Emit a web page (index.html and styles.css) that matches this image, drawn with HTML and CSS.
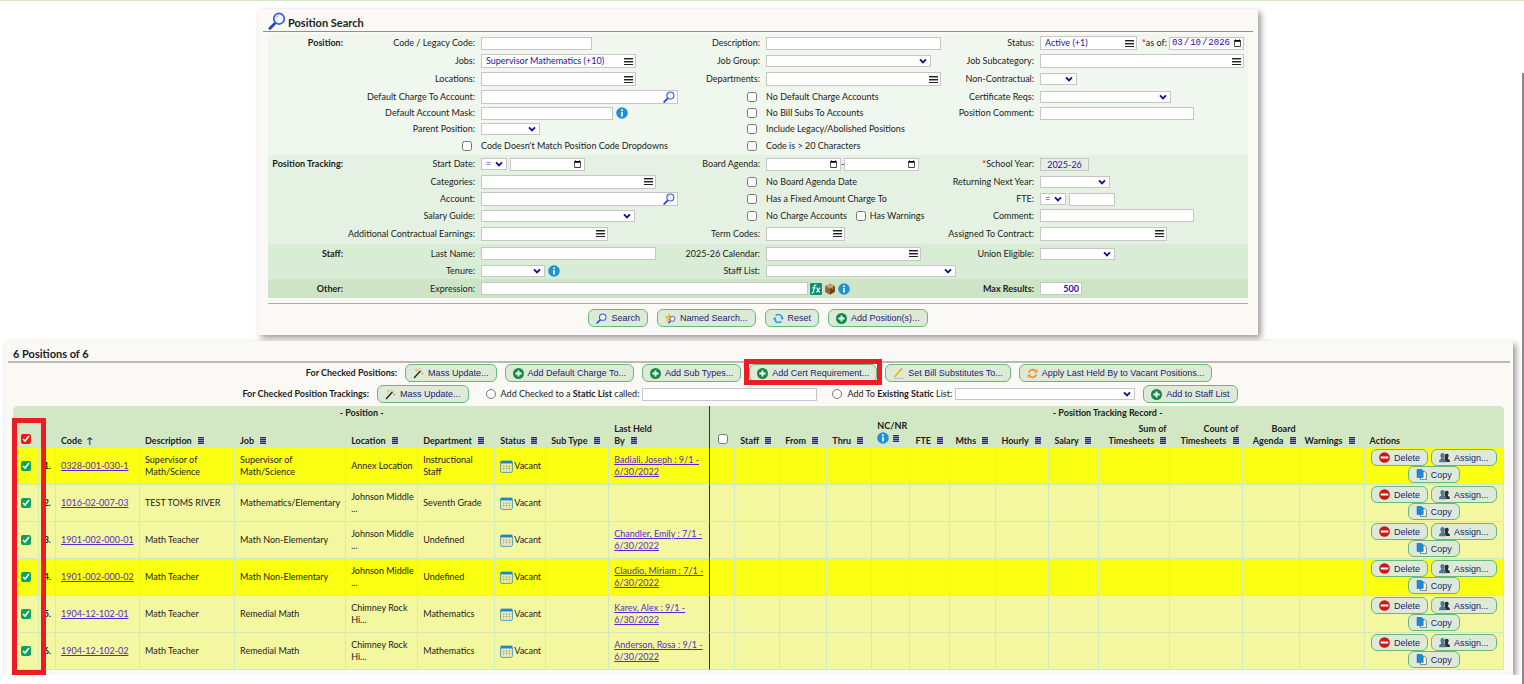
FILE: index.html
```html
<!DOCTYPE html>
<html lang="en">
<head>
<meta charset="utf-8">
<title>Position Search</title>
<link rel="stylesheet" href="styles.css">
</head>
<body>
<svg class="sprite" aria-hidden="true">
  <symbol id="lens" viewBox="0 0 16 16"><path d="M6 10.2L1.6 14.6" stroke="#2744c8" stroke-width="2.4" stroke-linecap="round"/><circle cx="9.8" cy="6" r="4.7" fill="#eef7ff" stroke="#3a55d8" stroke-width="1.5"/><path d="M7.4 5.2a2.8 2.8 0 0 1 2.2-2" stroke="#9fc4f4" fill="none"/></symbol>
  <symbol id="starlens" viewBox="0 0 16 16"><path d="M6 .8l1.7 4 4.3.4-3.2 3 1 4.4L6 10.400 2.200 12.600l1-4.400L0 5.200l4.300-.4z" fill="#f7c510" stroke="#d9a400" stroke-width=".5"/><path d="M8 11.400L5 15" stroke="#2744c8" stroke-width="2"/><circle cx="10.800" cy="8.500" r="3.700" fill="#f3f3e0" stroke="#4a63c8" stroke-width="1.400"/></symbol>
  <symbol id="reset" viewBox="0 0 16 16"><path d="M13.600 7A5.800 5.800 0 0 0 4 3.700M2.400 9A5.800 5.800 0 0 0 12 12.300" fill="none" stroke="#2d9fe0" stroke-width="2.300"/><path d="M10.500 6.500h5.500l-2.700 4zM0 9.500h5.500L2.700 5.500z" fill="#2d9fe0"/></symbol>
  <symbol id="plus" viewBox="0 0 16 16"><circle cx="8" cy="8" r="8" fill="#128a45"/><path d="M8 3.500v9M3.500 8h9" stroke="#fff" stroke-width="2.600"/></symbol>
  <symbol id="wand" viewBox="0 0 16 16"><path d="M1.500 14.500L12 3" stroke="#222" stroke-width="1.900"/><path d="M10.700 4.300L13.500 1.200" stroke="#eee" stroke-width="1.700"/><path d="M5 1v4M3 3h4M13.500 6v4M11.500 8h4M9 0v2" stroke="#f3a33a" stroke-width="1.100"/></symbol>
  <symbol id="pencil" viewBox="0 0 16 16"><path d="M2 15.200h13" stroke="#b9b9b9" stroke-width="1.300"/><path d="M3.500 11.500L11.700 2" stroke="#f2b90f" stroke-width="2.600"/><path d="M11.500 2.300L13 .6" stroke="#f07fae" stroke-width="2.600"/><path d="M2.300 10.500l2.300 2-3.300 1.500z" fill="#d8a56a"/></symbol>
  <symbol id="cycle" viewBox="0 0 16 16"><path d="M2.500 6.500A5.800 5.800 0 0 1 12 4M13.500 9.500A5.800 5.800 0 0 1 4 12" fill="none" stroke="#f08a24" stroke-width="2.300"/><path d="M10 6.500h5V1.200zM6 9.500H1v5.300z" fill="#f08a24"/></symbol>
  <symbol id="info" viewBox="0 0 16 16"><circle cx="8" cy="8" r="7.700" fill="#1e90d8"/><circle cx="8" cy="4.200" r="1.300" fill="#fff"/><path d="M8 6.800v5.700" stroke="#fff" stroke-width="2.200"/></symbol>
  <symbol id="fx" viewBox="0 0 16 16"><rect width="16" height="16" rx="1.500" fill="#0f8f7a"/><path d="M8.300 2.800C5.500 2 5.800 5 5 9.500c-.4 2.500-.8 4-2.800 3.600M3.200 6.300h4.300M8.600 6.300c2 0 2.300 6 4.600 5.800M13.700 6.300c-1.600 0-3.400 5.800-5.400 5.800" fill="none" stroke="#fff" stroke-width="1.500"/></symbol>
  <symbol id="box" viewBox="0 0 16 16"><path d="M8 .5l6.500 3.300L8 7.200 1.500 3.800z" fill="#c98f58"/><path d="M1.500 3.800L8 7.200v8.300l-6.500-3.600z" fill="#9a6233"/><path d="M14.500 3.800L8 7.200v8.300l6.500-3.600z" fill="#6f4320"/><path d="M4.500 2.300L11 5.700v2" stroke="#e8c79c" fill="none"/></symbol>
  <symbol id="cal" viewBox="0 0 16 16"><rect x=".8" y="1.500" width="14.400" height="13.700" rx="1.800" fill="#f6f3c8" fill-opacity=".75" stroke="#4795b8" stroke-width="1.200"/><path d="M.8 1h14.400v3.300H.8z" fill="#1a86d2"/><path d="M4.500 5.500v8M8 5.500v8M11.500 5.500v8M2.500 7.500h11M2.500 10.500h11" stroke="#a9a787" stroke-width=".7"/></symbol>
  <symbol id="stop" viewBox="0 0 16 16"><circle cx="8" cy="8" r="7.800" fill="#cf1616"/><path d="M2.500 8h11" stroke="#fff" stroke-width="3"/></symbol>
  <symbol id="people" viewBox="0 0 16 16"><path d="M8.500 4.500a3 3 0 0 1 5.500 0c.2 1.700-.3 3-1 4v1.500c1.500.5 3 1 3 4.500H8z" fill="#26303c"/><path d="M2 4a3.200 3.200 0 0 1 6.200 0c.2 1.800-.4 3.200-1.200 4.200v1.600c2 .6 3.500 1.200 3.500 5.200H0c0-4 1.200-4.600 3.200-5.200V8.200C2.400 7.200 1.800 5.800 2 4z" fill="#557590"/></symbol>
  <symbol id="copy" viewBox="0 0 16 16"><path d="M6.500 3.500h6l2.500 2.500v9.500h-8.500z" fill="#fff" stroke="#444" stroke-width="1"/><path d="M1.500.5H8l2.500 2.500v9.500h-9z" fill="#1b8bd8" stroke="#0f5f9a" stroke-width=".7"/></symbol>
</svg>

<section class="panel search-panel">
  <h1 class="panel-title"><svg class="i18"><use href="#lens"/></svg><span>Position Search</span></h1>
  <form class="form">
    <div class="grid sec1">
      <span class="sect">Position:</span>
      <label class="lbl" for="code">Code / Legacy Code:</label><div class="ctl"><input id="code" class="f w111"></div>
      <label class="lbl" for="desc">Description:</label><div class="ctl"><input id="desc" class="f w175"></div>
      <label class="lbl" for="status">Status:</label><div class="ctl"><span class="combo w97"><input id="status" value="Active (+1)"><button type="button" aria-label="Choose" class="bars"></button></span><label class="asof" for="asof"><b class="req">*</b>as of:</label><input id="asof" type="date" class="f date w75 filled" value="2026-03-10"></div>

      <label class="lbl c2" for="jobs">Jobs:</label><div class="ctl"><span class="combo w155"><input id="jobs" value="Supervisor Mathematics (+10)"><button type="button" aria-label="Choose" class="bars"></button></span></div>
      <label class="lbl" for="jg">Job Group:</label><div class="ctl"><select id="jg" class="f w165"><option></option></select></div>
      <label class="lbl" for="jsub">Job Subcategory:</label><div class="ctl"><span class="combo w204"><input id="jsub"><button type="button" aria-label="Choose" class="bars"></button></span></div>

      <label class="lbl c2" for="loc">Locations:</label><div class="ctl"><span class="combo w155"><input id="loc"><button type="button" aria-label="Choose" class="bars"></button></span></div>
      <label class="lbl" for="dept">Departments:</label><div class="ctl"><span class="combo w175"><input id="dept"><button type="button" aria-label="Choose" class="bars"></button></span></div>
      <label class="lbl" for="nc">Non-Contractual:</label><div class="ctl"><select id="nc" class="f w37"><option></option></select></div>

      <label class="lbl c2" for="dca">Default Charge To Account:</label><div class="ctl"><span class="combo w197"><input id="dca"><button type="button" aria-label="Look up" class="look"><svg class="i12"><use href="#lens"/></svg></button></span></div>
      <div class="chk"><input type="checkbox" id="k1"></div><label class="ctl" for="k1">No Default Charge Accounts</label>
      <label class="lbl" for="cert">Certificate Reqs:</label><div class="ctl"><select id="cert" class="f w131"><option></option></select></div>

      <label class="lbl c2" for="mask">Default Account Mask:</label><div class="ctl"><input id="mask" class="f w132"><svg class="i12"><use href="#info"/></svg></div>
      <div class="chk"><input type="checkbox" id="k2"></div><label class="ctl" for="k2">No Bill Subs To Accounts</label>
      <label class="lbl" for="pcom">Position Comment:</label><div class="ctl"><input id="pcom" class="f w154"></div>

      <label class="lbl c2" for="parent">Parent Position:</label><div class="ctl"><select id="parent" class="f w59"><option></option></select></div>
      <div class="chk"><input type="checkbox" id="k3"></div><label class="ctl" for="k3">Include Legacy/Abolished Positions</label>

      <div class="chk c2"><input type="checkbox" id="k0"></div><label class="ctl" for="k0">Code Doesn't Match Position Code Dropdowns</label>
      <div class="chk"><input type="checkbox" id="k4"></div><label class="ctl" for="k4">Code is &gt; 20 Characters</label>
    </div>

    <div class="grid sec2">
      <span class="sect">Position Tracking:</span>
      <label class="lbl" for="sd">Start Date:</label><div class="ctl"><select class="f w26" aria-label="Start date operator"><option>=</option></select><input id="sd" type="date" class="f date w75"></div>
      <label class="lbl" for="ba">Board Agenda:</label><div class="ctl tight"><input id="ba" type="date" class="f date w75"><span>-</span><input type="date" aria-label="Board agenda end" class="f date w75"></div>
      <label class="lbl" for="sy"><b class="req">*</b>School Year:</label><div class="ctl"><input id="sy" class="f w49 year" value="2025-26"></div>

      <label class="lbl c2" for="cat">Categories:</label><div class="ctl"><span class="combo w175"><input id="cat"><button type="button" aria-label="Choose" class="bars"></button></span></div>
      <div class="chk"><input type="checkbox" id="k5"></div><label class="ctl" for="k5">No Board Agenda Date</label>
      <label class="lbl" for="rny">Returning Next Year:</label><div class="ctl"><select id="rny" class="f w70"><option></option></select></div>

      <label class="lbl c2" for="acct">Account:</label><div class="ctl"><span class="combo w197"><input id="acct"><button type="button" aria-label="Look up" class="look"><svg class="i12"><use href="#lens"/></svg></button></span></div>
      <div class="chk"><input type="checkbox" id="k6"></div><label class="ctl" for="k6">Has a Fixed Amount Charge To</label>
      <label class="lbl" for="fte">FTE:</label><div class="ctl"><select class="f w26" aria-label="FTE operator"><option>=</option></select><input id="fte" class="f w46"></div>

      <label class="lbl c2" for="sg">Salary Guide:</label><div class="ctl"><select id="sg" class="f w154"><option></option></select></div>
      <div class="chk"><input type="checkbox" id="k7"></div><div class="ctl"><label for="k7">No Charge Accounts</label><input type="checkbox" id="k8" class="inline-chk"><label for="k8">Has Warnings</label></div>
      <label class="lbl" for="com">Comment:</label><div class="ctl"><input id="com" class="f w154"></div>

      <label class="lbl c2" for="ace">Additional Contractual Earnings:</label><div class="ctl"><span class="combo w127"><input id="ace"><button type="button" aria-label="Choose" class="bars"></button></span></div>
      <label class="lbl" for="tc">Term Codes:</label><div class="ctl"><span class="combo w79"><input id="tc"><button type="button" aria-label="Choose" class="bars"></button></span></div>
      <label class="lbl" for="atc">Assigned To Contract:</label><div class="ctl"><span class="combo w127"><input id="atc"><button type="button" aria-label="Choose" class="bars"></button></span></div>
    </div>

    <div class="grid sec3">
      <span class="sect">Staff:</span>
      <label class="lbl" for="ln">Last Name:</label><div class="ctl"><input id="ln" class="f w175"></div>
      <label class="lbl" for="calr">2025-26 Calendar:</label><div class="ctl"><span class="combo w155"><input id="calr"><button type="button" aria-label="Choose" class="bars"></button></span></div>
      <label class="lbl" for="ue">Union Eligible:</label><div class="ctl"><select id="ue" class="f w75"><option></option></select></div>

      <label class="lbl c2" for="ten">Tenure:</label><div class="ctl"><select id="ten" class="f w64"><option></option></select><svg class="i12"><use href="#info"/></svg></div>
      <label class="lbl" for="sl">Staff List:</label><div class="ctl"><select id="sl" class="f w190"><option></option></select></div>
    </div>

    <div class="grid sec4">
      <span class="sect">Other:</span>
      <label class="lbl" for="exp">Expression:</label><div class="ctl wide"><input id="exp" class="f w327"><svg class="i12"><use href="#fx"/></svg><svg class="i12"><use href="#box"/></svg><svg class="i12"><use href="#info"/></svg></div>
      <label class="lbl strong" for="max">Max Results:</label><div class="ctl"><input id="max" class="f w42 num" value="500"></div>
    </div>
  </form>
  <div class="actions">
    <button class="btn"><svg class="i11"><use href="#lens"/></svg>Search</button>
    <button class="btn"><svg class="i11"><use href="#starlens"/></svg>Named Search...</button>
    <button class="btn"><svg class="i11"><use href="#reset"/></svg>Reset</button>
    <button class="btn"><svg class="i11"><use href="#plus"/></svg>Add Position(s)...</button>
  </div>
</section>

<section class="panel results-panel">
  <h2 class="results-title">6 Positions of 6</h2>
  <div class="bar">
    <b class="lead">For Checked Positions:</b>
    <button class="btn"><svg class="i11"><use href="#wand"/></svg>Mass Update...</button>
    <button class="btn"><svg class="i11"><use href="#plus"/></svg>Add Default Charge To...</button>
    <button class="btn"><svg class="i11"><use href="#plus"/></svg>Add Sub Types...</button>
    <span class="marked"><button class="btn"><svg class="i11"><use href="#plus"/></svg>Add Cert Requirement...</button></span>
    <button class="btn"><svg class="i11"><use href="#pencil"/></svg>Set Bill Substitutes To...</button>
    <button class="btn"><svg class="i11"><use href="#cycle"/></svg>Apply Last Held By to Vacant Positions...</button>
  </div>
  <div class="bar bar2">
    <b class="lead">For Checked Position Trackings:</b>
    <button class="btn"><svg class="i11"><use href="#wand"/></svg>Mass Update...</button>
    <span class="opt opt-first"><input type="radio" name="list" id="r1"><label for="r1">Add Checked to a <b>Static List</b> called:</label><input class="f w175" aria-label="Static list name"></span>
    <span class="opt"><input type="radio" name="list" id="r2"><label for="r2">Add To <b>Existing Static</b> List:</label><select class="f w180" aria-label="Existing static list"><option></option></select></span>
    <button class="btn"><svg class="i11"><use href="#plus"/></svg>Add to Staff List</button>
  </div>

  <div class="table-wrap">
  <table>
    <colgroup><col class="p26"><col class="p17"><col class="p84"><col class="p95"><col class="p111"><col class="p72"><col class="p77"><col class="p51"><col class="p63"><col class="p101"><col class="p25"><col class="p45"><col class="p47"><col class="p45"><col class="p38"><col class="p40"><col class="p46"><col class="p53"><col class="p50"><col class="p71"><col class="p72"><col class="p57"><col class="p65"><col class="p139"></colgroup>
    <thead>
      <tr class="groups"><th colspan="10" class="split">- Position -</th><th colspan="14">- Position Tracking Record -</th></tr>
      <tr class="heads">
        <th class="ck"><input type="checkbox" class="red" aria-label="Select all" checked></th><th></th>
        <th>Code <span class="up">↑</span></th><th>Description <i class="menu"></i></th><th>Job <i class="menu"></i></th><th>Location <i class="menu"></i></th><th>Department <i class="menu"></i></th><th>Status <i class="menu"></i></th><th>Sub Type <i class="menu"></i></th><th class="split">Last Held<br>By <i class="menu"></i></th>
        <th class="ck"><input type="checkbox" aria-label="Select all trackings"></th><th>Staff <i class="menu"></i></th><th>From <i class="menu"></i></th><th>Thru <i class="menu"></i></th><th>NC/NR<br><span class="pair"><svg class="i12"><use href="#info"/></svg><i class="menu"></i></span></th><th>FTE <i class="menu"></i></th><th>Mths <i class="menu"></i></th><th>Hourly <i class="menu"></i></th><th>Salary <i class="menu"></i></th><th class="r">Sum of<br>Timesheets <i class="menu"></i></th><th class="r">Count of<br>Timesheets <i class="menu"></i></th><th class="r">Board<br>Agenda <i class="menu"></i></th><th>Warnings <i class="menu"></i></th><th>Actions</th>
      </tr>
    </thead>
    <tbody>
      <tr class="hot"><td class="ck"><input type="checkbox" aria-label="Row 1" checked></td><td class="no">1.</td><td><a href="#">0328-001-030-1</a></td><td>Supervisor of Math/Science</td><td>Supervisor of<br>Math/Science</td><td>Annex Location</td><td>Instructional Staff</td><td><span class="st"><svg class="i13"><use href="#cal"/></svg>Vacant</span></td><td></td><td class="split"><a href="#">Badiali, Joseph : 9/1 -<br>6/30/2022</a></td><td></td><td></td><td></td><td></td><td></td><td></td><td></td><td></td><td></td><td></td><td></td><td></td><td></td><td class="act"><div class="acts"><button class="btn"><svg class="i11"><use href="#stop"/></svg>Delete</button><button class="btn"><svg class="i11"><use href="#people"/></svg>Assign...</button><button class="btn"><svg class="i11"><use href="#copy"/></svg>Copy</button></div></td></tr>
      <tr><td class="ck"><input type="checkbox" aria-label="Row 2" checked></td><td class="no">2.</td><td><a href="#">1016-02-007-03</a></td><td>TEST TOMS RIVER</td><td>Mathematics/Elementary</td><td>Johnson Middle<br>...</td><td>Seventh Grade</td><td><span class="st"><svg class="i13"><use href="#cal"/></svg>Vacant</span></td><td></td><td class="split"></td><td></td><td></td><td></td><td></td><td></td><td></td><td></td><td></td><td></td><td></td><td></td><td></td><td></td><td class="act"><div class="acts"><button class="btn"><svg class="i11"><use href="#stop"/></svg>Delete</button><button class="btn"><svg class="i11"><use href="#people"/></svg>Assign...</button><button class="btn"><svg class="i11"><use href="#copy"/></svg>Copy</button></div></td></tr>
      <tr><td class="ck"><input type="checkbox" aria-label="Row 3" checked></td><td class="no">3.</td><td><a href="#">1901-002-000-01</a></td><td>Math Teacher</td><td>Math Non-Elementary</td><td>Johnson Middle<br>...</td><td>Undefined</td><td><span class="st"><svg class="i13"><use href="#cal"/></svg>Vacant</span></td><td></td><td class="split"><a href="#">Chandler, Emily : 7/1 -<br>6/30/2022</a></td><td></td><td></td><td></td><td></td><td></td><td></td><td></td><td></td><td></td><td></td><td></td><td></td><td></td><td class="act"><div class="acts"><button class="btn"><svg class="i11"><use href="#stop"/></svg>Delete</button><button class="btn"><svg class="i11"><use href="#people"/></svg>Assign...</button><button class="btn"><svg class="i11"><use href="#copy"/></svg>Copy</button></div></td></tr>
      <tr class="hot"><td class="ck"><input type="checkbox" aria-label="Row 4" checked></td><td class="no">4.</td><td><a href="#">1901-002-000-02</a></td><td>Math Teacher</td><td>Math Non-Elementary</td><td>Johnson Middle<br>...</td><td>Undefined</td><td><span class="st"><svg class="i13"><use href="#cal"/></svg>Vacant</span></td><td></td><td class="split"><a href="#">Claudio, Miriam : 7/1 -<br>6/30/2022</a></td><td></td><td></td><td></td><td></td><td></td><td></td><td></td><td></td><td></td><td></td><td></td><td></td><td></td><td class="act"><div class="acts"><button class="btn"><svg class="i11"><use href="#stop"/></svg>Delete</button><button class="btn"><svg class="i11"><use href="#people"/></svg>Assign...</button><button class="btn"><svg class="i11"><use href="#copy"/></svg>Copy</button></div></td></tr>
      <tr><td class="ck"><input type="checkbox" aria-label="Row 5" checked></td><td class="no">5.</td><td><a href="#">1904-12-102-01</a></td><td>Math Teacher</td><td>Remedial Math</td><td>Chimney Rock<br>Hi...</td><td>Mathematics</td><td><span class="st"><svg class="i13"><use href="#cal"/></svg>Vacant</span></td><td></td><td class="split"><a href="#">Karev, Alex : 9/1 -<br>6/30/2022</a></td><td></td><td></td><td></td><td></td><td></td><td></td><td></td><td></td><td></td><td></td><td></td><td></td><td></td><td class="act"><div class="acts"><button class="btn"><svg class="i11"><use href="#stop"/></svg>Delete</button><button class="btn"><svg class="i11"><use href="#people"/></svg>Assign...</button><button class="btn"><svg class="i11"><use href="#copy"/></svg>Copy</button></div></td></tr>
      <tr><td class="ck"><input type="checkbox" aria-label="Row 6" checked></td><td class="no">6.</td><td><a href="#">1904-12-102-02</a></td><td>Math Teacher</td><td>Remedial Math</td><td>Chimney Rock<br>Hi...</td><td>Mathematics</td><td><span class="st"><svg class="i13"><use href="#cal"/></svg>Vacant</span></td><td></td><td class="split"><a href="#">Anderson, Rosa : 9/1 -<br>6/30/2022</a></td><td></td><td></td><td></td><td></td><td></td><td></td><td></td><td></td><td></td><td></td><td></td><td></td><td></td><td class="act"><div class="acts"><button class="btn"><svg class="i11"><use href="#stop"/></svg>Delete</button><button class="btn"><svg class="i11"><use href="#people"/></svg>Assign...</button><button class="btn"><svg class="i11"><use href="#copy"/></svg>Copy</button></div></td></tr>
    </tbody>
  </table>
  <div class="column-mark"></div>
  </div>
</section>
<div class="scroll-thumb"></div>
</body>
</html>
```
FILE: styles.css
```css
* { box-sizing: border-box; }
body { margin: 0; padding: 8px 12px 0 4px; background: #fff; border-top: 1px solid #d3e6c4; font: 9px/12px Lato, "Liberation Sans", sans-serif; color: #1c1c1c; overflow: hidden; }
.sprite { display: none; }
svg { flex: none; }
.i11 { width: 11px; height: 11px; }
.i12 { width: 12px; height: 12px; }
.i13 { width: 13px; height: 13px; }
.i18 { width: 18px; height: 18px; }
input, select, button { font: inherit; margin: 0; }

.panel { background: #faf9f5; box-shadow: 3px 3px 6px rgba(0,0,0,.4); }
.search-panel { max-width: 1000px; margin: 0 auto; padding: 2px 5px 8px; }
.panel-title { display: flex; align-items: center; gap: 2px; margin: 0; padding: 0 0 0 5px; height: 21px; font-size: 11px; border-bottom: 1px solid #8f8f8f; }
.panel-title span { padding-top: 4px; }
.form { margin: 2px 5px 0; padding-bottom: 5px; border-bottom: 1px solid #aaa; }

.grid { display: grid; grid-template-columns: minmax(0,75fr) minmax(0,138fr) minmax(0,200fr) minmax(0,85fr) minmax(0,174fr) minmax(0,100fr) minmax(0,208fr); align-items: center; white-space: nowrap; }
.sec1 { background: #eff7ee; grid-template-rows: 18px 18px 18px 17px 16px 16px 18px; border-radius: 5px 5px 0 0; }
.sec2 { background: #e5f2e3; grid-template-rows: 18px 17px 18px 15px 21px; }
.sec3 { background: #d9ecd5; grid-template-rows: 19px 16px; }
.sec4 { background: #cde4c7; grid-template-rows: 19px; }
.sect { font-weight: 700; display: flex; justify-content: flex-end; }
.lbl { display: flex; justify-content: flex-end; padding-right: 6px; }
.c2 { grid-column: 2; }
.strong { font-weight: 700; }
.ctl { display: flex; align-items: center; gap: 3px; }
.tight { gap: 0; }
.wide { grid-column: 3 / 6; gap: 2px; }
.chk { display: flex; justify-content: flex-end; padding-right: 9px; }
.req { color: #e22; }

.f, .combo { height: 13px; border: 1px solid #c6c6c6; background: #fff; color: #2a0fa5; padding: 0 4px; border-radius: 0; flex: none; outline: none; }
.combo { display: flex; align-items: center; height: 14px; padding: 0 2px 0 4px; }
.combo input { flex: 1; min-width: 0; border: 0; padding: 0; background: none; color: #2a0fa5; height: 12px; outline: none; }
.bars { width: 9px; height: 7px; border: 0; padding: 0; background: repeating-linear-gradient(#222 0 1px, #999 1px 2px, transparent 2px 3px); }
.look { width: 12px; height: 12px; border: 0; padding: 0; background: none; display: flex; }
select.f { appearance: none; height: 12px; line-height: 10px; background: #fff url("data:image/svg+xml,%3Csvg xmlns='http://www.w3.org/2000/svg' viewBox='0 0 8 6'%3E%3Cpath d='M1 1.300l3 3 3-3' fill='none' stroke='%231c0a9a' stroke-width='1.900'/%3E%3C/svg%3E") no-repeat right 3px center / 8px 6px; }
.date { font: 9px/10px "Liberation Mono", monospace; padding: 0 2px; }
.date::-webkit-datetime-edit { padding: 0; color: transparent; }
.date::-webkit-datetime-edit-fields-wrapper { padding: 0; }
.date::-webkit-calendar-picker-indicator { width: 9px; height: 9px; padding: 0; margin: 0; }
.filled { padding: 0 1px; }
.filled::-webkit-datetime-edit { color: #2a0fa5; }
.asof { margin: 0 -1px 0 2px; }
.year { background: #e7efe6; text-align: center; }
.num { text-align: right; font-weight: 700; padding: 0 2px; }
.w26 { width: 26px; } .w37 { width: 37px; } .w42 { width: 42px; } .w46 { width: 46px; } .w49 { width: 49px; } .w59 { width: 59px; } .w64 { width: 64px; } .w70 { width: 70px; } .w75 { width: 75px; } .w79 { width: 79px; } .w97 { width: 97px; } .w111 { width: 111px; } .w127 { width: 127px; } .w131 { width: 131px; } .w132 { width: 132px; } .w154 { width: 154px; } .w155 { width: 155px; } .w165 { width: 165px; } .w175 { width: 175px; } .w180 { width: 180px; } .w190 { width: 190px; } .w197 { width: 197px; } .w204 { width: 204px; } .w327 { width: 327px; }
input[type=checkbox] { width: 10px; height: 10px; accent-color: #0ba35b; }
input.red { accent-color: #f2170f; }
input[type=radio] { width: 10px; height: 10px; }
.inline-chk { margin: 0 1px 0 6px; }

.actions { display: flex; justify-content: center; gap: 9px; padding-top: 5px; }
.btn { display: inline-flex; align-items: center; gap: 4px; height: 18px; padding: 0 7px; border: 1px solid #68b878; border-radius: 6px; background: #deead8; color: #221c70; font: 9px/12px "Liberation Sans", Arial, sans-serif; white-space: nowrap; }

.results-panel { margin: 6px -1px 0 1px; padding: 4px 3px 5px; }
.results-title { margin: 0; padding: 1px 5px 0; font-size: 11px; line-height: 15px; border-bottom: 2px solid #b9b9b9; }
.bar { display: flex; align-items: center; justify-content: center; gap: 8px; padding-top: 1px; white-space: nowrap; }
.bar2 { padding: 3px 38px 0 0; }
.opt { display: flex; align-items: center; gap: 3px; }
.opt input[type=radio] { margin-right: 2px; }
.opt-first { padding: 0 7px 0 9px; }
.marked { position: relative; display: flex; }
.marked::after { content: ""; position: absolute; inset: -5px -5px -3px; border: 5px solid #ed1c24; pointer-events: none; }

.table-wrap { position: relative; margin: 3px 6px 0 5px; }
table { width: 100%; table-layout: fixed; border-spacing: 0; }
.p17 { width: 17px; } .p25 { width: 25px; } .p26 { width: 26px; } .p38 { width: 38px; } .p40 { width: 40px; } .p45 { width: 45px; } .p46 { width: 46px; } .p47 { width: 47px; } .p50 { width: 50px; } .p51 { width: 51px; } .p53 { width: 53px; } .p57 { width: 57px; } .p63 { width: 63px; } .p65 { width: 65px; } .p71 { width: 71px; } .p72 { width: 72px; } .p77 { width: 77px; } .p84 { width: 84px; } .p95 { width: 95px; } .p101 { width: 101px; } .p111 { width: 111px; } .p139 { width: 139px; }
th, td { padding: 0 4px 0 5px; text-align: left; white-space: nowrap; }
th { background: #d2e7c4; vertical-align: bottom; font-weight: 700; }
.groups th { height: 14px; text-align: center; vertical-align: middle; }
.groups th:first-child { border-top-left-radius: 5px; }
.groups th:last-child { border-top-right-radius: 5px; }
.heads th { height: 27px; padding-bottom: 1px; }
th.r { text-align: right; }
.menu { display: inline-block; width: 6px; height: 7px; margin-left: 4px; background: repeating-linear-gradient(#2d2388 0 1px, #8d87bd 1px 2px); }
.pair { display: inline-flex; align-items: center; height: 12px; }
.up { color: #2d1f9a; margin-left: 2px; }
td { height: 37px; background: #f2f7a0; border-right: 1px solid #d3e8bd; border-bottom: 1px solid #d3e8bd; }
.hot td { background: #fbff12; }
td:nth-child(4), td:nth-child(7) { white-space: normal; }
.ck { text-align: center; padding: 0; }
.ck input { display: block; margin: 0 auto; }
.heads .ck { padding-bottom: 4px; }
td.no { padding: 0 4px 0 0; text-align: right; font-weight: 700; }
.split, td.split { border-right: 1px solid #33331c; }
.st { display: flex; align-items: center; gap: 1px; }
a { color: #5a28d0; }
td.act { padding: 0; }
.acts { display: flex; flex-wrap: wrap; justify-content: center; column-gap: 3px; }
.act .btn { height: 17px; }
.column-mark { position: absolute; left: -1px; top: 12px; bottom: -5px; width: 34px; border: 5px solid #ed1c24; pointer-events: none; }
.scroll-thumb { position: fixed; right: 0; top: 73px; bottom: 0; width: 2px; background: #8a8a8a; }
```
